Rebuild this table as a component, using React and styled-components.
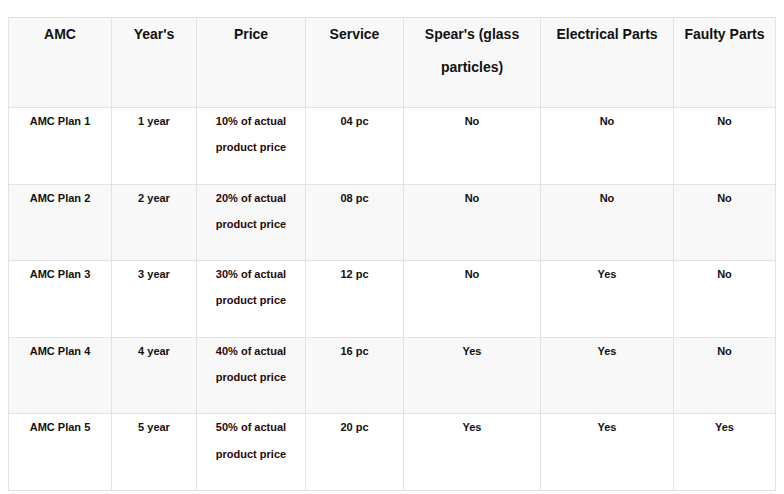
import React from "react";
import styled, { createGlobalStyle } from "styled-components";

const GlobalStyle = createGlobalStyle`
  body {
    margin: 8px;
    background: #fff;
    font-family: "Liberation Sans", Arial, sans-serif;
    color: #111;
  }
`;

const Table = styled.table`
  width: 767px;
  margin-top: 9px;
  border-collapse: collapse;
  table-layout: fixed;
`;

const HeadCell = styled.th`
  background: #f8f8f8;
  border: 1px solid #e2e2e2;
  padding: 0 6px 23px;
  font-size: 14px;
  font-weight: 700;
  line-height: 33px;
  text-align: center;
  vertical-align: top;
`;

const Row = styled.tr`
  background: ${props => (props.$shade ? "#f8f8f8" : "#fff")};
`;

const Cell = styled.td`
  border: 1px solid #e2e2e2;
  padding: 0 6px 23px;
  font-size: 11px;
  font-weight: 700;
  line-height: 26.3px;
  text-align: center;
  vertical-align: top;
  color: ${props => props.$tone || "#111"};
`;

const widths = [103, 85, 109, 98, 137, 133, 102];

const heads = [
  "AMC",
  "Year's",
  "Price",
  "Service",
  "Spear's (glass particles)",
  "Electrical Parts",
  "Faulty Parts",
];

const plans = [
  ["AMC Plan 1", "1 year", "10%", "04 pc", "No", "No", "No"],
  ["AMC Plan 2", "2 year", "20%", "08 pc", "No", "No", "No"],
  ["AMC Plan 3", "3 year", "30%", "12 pc", "No", "Yes", "No"],
  ["AMC Plan 4", "4 year", "40%", "16 pc", "Yes", "Yes", "No"],
  ["AMC Plan 5", "5 year", "50%", "20 pc", "Yes", "Yes", "Yes"],
];

export default function App() {
  return (
    <>
      <GlobalStyle />
      <Table>
        <colgroup>
          {widths.map((w, i) => (
            <col key={i} style={{ width: w }} />
          ))}
        </colgroup>
        <thead>
          <tr>
            {heads.map(h => (
              <HeadCell key={h}>{h}</HeadCell>
            ))}
          </tr>
        </thead>
        <tbody>
          {plans.map((p, i) => (
            <Row key={p[0]} $shade={i % 2 === 1}>
              <Cell>{p[0]}</Cell>
              <Cell>{p[1]}</Cell>
              <Cell $tone="#2a0808">
                {p[2]} of actual product price
              </Cell>
              <Cell>{p[3]}</Cell>
              <Cell>{p[4]}</Cell>
              <Cell>{p[5]}</Cell>
              <Cell>{p[6]}</Cell>
            </Row>
          ))}
        </tbody>
      </Table>
    </>
  );
}
